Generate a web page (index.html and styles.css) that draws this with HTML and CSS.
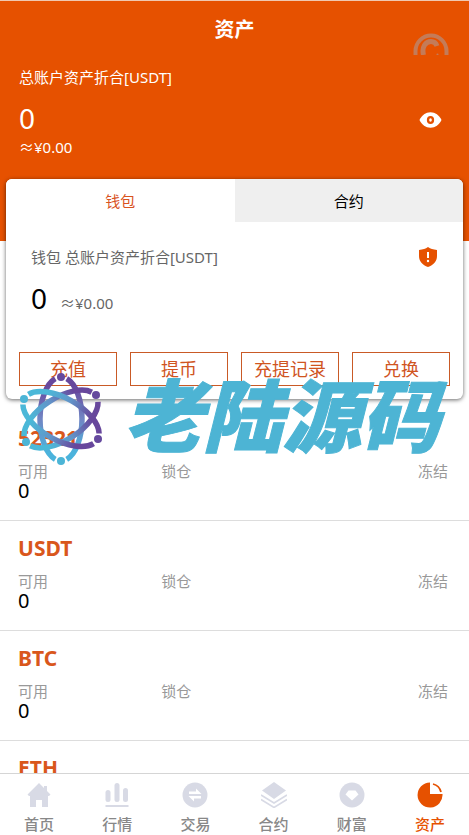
FILE: index.html
```html
<!DOCTYPE html>
<html lang="zh-CN">
<head>
<meta charset="utf-8">
<meta name="viewport" content="width=device-width, initial-scale=1">
<title>资产</title>
<link rel="stylesheet" href="styles.css">
</head>
<body>
<div class="app">
  <main class="content">
    <header class="hero">
      <h1 class="title">资产</h1>
      <svg class="record" viewBox="0 0 36 22" aria-hidden="true">
        <path d="M2.500 22V18a15.500 15.500 0 0 1 31 0v4" fill="none" stroke="currentColor" stroke-width="4"/>
        <path d="M10.500 22C8.500 14 12.500 8.500 18 8.500c3 0 5 1.500 6 4.500" fill="none" stroke="currentColor" stroke-width="5"/>
        <circle cx="24.500" cy="21.500" r="1"/>
      </svg>
      <p class="label">总账户资产折合[USDT]</p>
      <div class="total">
        <span class="amount">0</span>
        <button class="icon-button" type="button" aria-label="显示或隐藏资产">
          <svg class="eye" viewBox="0 0 24 18"><path fill="#fff" d="M.5 9C3 4 7 1 12 1s9 3 11.500 8C21 14 17 17 12 17S3 14 .5 9Z"/><ellipse cx="12" cy="9" rx="2.600" ry="3" fill="none" stroke="#e65100" stroke-width="2.400"/></svg>
        </button>
      </div>
      <p class="approx">≈¥0.00</p>
    </header>

    <section class="card">
      <div class="tabs">
        <button class="tab tab-active" type="button">钱包</button>
        <button class="tab" type="button">合约</button>
      </div>
      <div class="wallet">
        <div class="wallet-head">
          <span>钱包 总账户资产折合[USDT]</span>
          <svg class="shield" viewBox="0 0 20 20" aria-hidden="true"><path fill="#e65100" d="M10 0c2.500 1.800 5 2.600 9 2.900V9c0 5.500-3.500 9-9 11C4.500 18 1 14.500 1 9V2.900C5 2.600 7.500 1.800 10 0Z"/><path d="M10 5v6" stroke="#fff" stroke-width="2"/><circle cx="10" cy="14" r="1.200" fill="#fff"/></svg>
        </div>
        <div class="wallet-sum"><span class="wallet-amount">0</span><span>≈¥0.00</span></div>
      </div>
      <div class="actions">
        <button class="action" type="button">充值</button>
        <button class="action" type="button">提币</button>
        <button class="action" type="button">充提记录</button>
        <button class="action" type="button">兑换</button>
      </div>
    </section>

    <ul class="coins">
      <li class="coin"><h2 class="coin-name">52321</h2><dl class="figures"><div><dt>可用</dt><dd>0</dd></div><div><dt>锁仓</dt></div><div class="last"><dt>冻结</dt></div></dl></li>
      <li class="coin"><h2 class="coin-name">USDT</h2><dl class="figures"><div><dt>可用</dt><dd>0</dd></div><div><dt>锁仓</dt></div><div class="last"><dt>冻结</dt></div></dl></li>
      <li class="coin"><h2 class="coin-name">BTC</h2><dl class="figures"><div><dt>可用</dt><dd>0</dd></div><div><dt>锁仓</dt></div><div class="last"><dt>冻结</dt></div></dl></li>
      <li class="coin"><h2 class="coin-name">ETH</h2></li>
    </ul>
  </main>

  <nav class="nav">
    <a class="nav-item" href="#"><svg viewBox="0 0 26 26"><path d="M13 1 1.500 12.500 3 14h1v11h6v-7h6v7h6V14h1l1.500-1.500L21 9V4h-3v2Z"/></svg>首页</a>
    <a class="nav-item" href="#"><svg viewBox="0 0 26 26"><rect x="1.500" y="8" width="5" height="12" rx="2.500"/><rect x="10.500" y="1" width="5" height="19" rx="2.500"/><rect x="19" y="6" width="5" height="14" rx="2.500"/><rect x="1.500" y="23" width="23" height="2"/></svg>行情</a>
    <a class="nav-item" href="#"><svg viewBox="0 0 26 26"><circle cx="13" cy="13" r="12.500"/><path fill="#fff" d="M7 9.500h7V6.500l5.500 5.500H7Zm12 4.500H6.500l5.500 5.500v-3h7Z"/></svg>交易</a>
    <a class="nav-item" href="#"><svg viewBox="0 0 26 26"><path d="m13 0 12 8.500L13 17 1 8.500Z"/><path d="m0 13 13 8 13-8M0 17.500l13 8 13-8" fill="none" stroke="currentColor" stroke-width="1.600"/></svg>合约</a>
    <a class="nav-item" href="#"><svg viewBox="0 0 26 26"><circle cx="13" cy="13" r="12.500"/><path fill="#fff" d="M9.500 8.500h7l3 4-6.500 6-6.500-6Z"/></svg>财富</a>
    <a class="nav-item nav-active" href="#"><svg viewBox="0 0 26 26"><path d="M13 .5V12h12.500A12.500 12.500 0 1 1 13 .5Z"/><path d="M16 2a11 11 0 0 1 8 8" fill="none" stroke="currentColor" stroke-width="1.800"/></svg>资产</a>
  </nav>

  <div class="watermark">
    <svg class="atom" viewBox="0 0 90 96" aria-hidden="true">
      <defs>
        <linearGradient id="ring"><stop offset=".2" stop-color="#4bb8d8"/><stop offset=".5" stop-color="#6293c8"/><stop offset=".8" stop-color="#67479c"/></linearGradient>
        <linearGradient id="drop"><stop offset=".1" stop-color="#67479c"/><stop offset=".5" stop-color="#7186c4"/><stop offset=".9" stop-color="#4bb3dc"/></linearGradient>
      </defs>
      <g fill="none" stroke-width="5.500">
        <ellipse cx="43" cy="48" rx="42" ry="21" transform="rotate(90 43 48)" stroke="url(#drop)" pathLength="100" stroke-dasharray="0 3 44 6 44 3"/>
        <ellipse cx="43" cy="48" rx="42" ry="21" transform="rotate(-33 43 48)" stroke="url(#ring)" pathLength="100" stroke-dasharray="0 3 44 6 44 3"/>
        <ellipse cx="43" cy="48" rx="42" ry="21" transform="rotate(29 43 48)" stroke="url(#ring)" pathLength="100" stroke-dasharray="0 3 44 6 44 3"/>
      </g>
      <g fill="#65499e"><circle cx="43" cy="6" r="4"/><circle cx="78" cy="24" r="4"/><circle cx="80" cy="68" r="4"/></g>
      <g fill="#4cb5d6"><circle cx="6" cy="28" r="4"/><circle cx="8" cy="71" r="4"/><circle cx="43" cy="90" r="4"/></g>
    </svg>
    <span class="brand">老陆源码</span>
  </div>
</div>
</body>
</html>
```
FILE: styles.css
```css
* { box-sizing: border-box; }
body, h1, h2, p, ul, dl, dd { margin: 0; padding: 0; }
body {
  font-family: "Noto Sans", "Noto Sans CJK SC", sans-serif;
  font-size: 15px;
  line-height: 20px;
  color: #000;
  background: #fff;
}
button { font: inherit; padding: 0; border: 0; cursor: pointer; }
.app { position: relative; display: flex; flex-direction: column; height: 100vh; overflow: hidden; }
.content { flex: 1; min-height: 0; overflow: hidden; }
.hero {
  position: relative;
  height: 241px;
  padding: 17px 19px 0;
  border-top: 1px solid #f0c8b0;
  background: #e65100;
  color: #fff;
}
.title { font-size: 20px; line-height: 24px; text-align: center; }
.record { position: absolute; top: 32px; right: 20px; width: 36px; height: 22px; color: #c47b58; fill: currentColor; }
.label { margin-top: 25px; }
.total { display: flex; justify-content: space-between; align-items: center; margin-top: 12px; padding-right: 8px; }
.amount { font-size: 28px; line-height: 38px; }
.icon-button { display: flex; padding-top: 4px; background: none; }
.eye { width: 23px; height: 18px; }
.card {
  position: relative;
  margin: -62px 6px 0;
  overflow: hidden;
  border-radius: 6px;
  background: #fff;
  box-shadow: 0 1px 4px rgba(0, 0, 0, .6);
}
.tabs { display: flex; }
.tab { flex: 1; height: 43px; background: #efefef; color: #000; }
.tab-active { background: #fff; color: #d9531e; }
.wallet { padding: 25px 25px 0; color: #666; }
.wallet-head { display: flex; justify-content: space-between; align-items: center; }
.shield { width: 20px; height: 20px; }
.wallet-sum { display: flex; align-items: baseline; gap: 13px; margin-top: 12px; }
.wallet-amount { font-size: 28px; line-height: 38px; color: #000; }
.actions { display: grid; grid-template-columns: repeat(4, 1fr); gap: 13px; padding: 35px 13px 13px; }
.action { height: 34px; border: 1px solid #c95a26; background: #fff; color: #d0551f; font-size: 18px; }
.coins { margin-top: 12px; list-style: none; }
.coin { height: 110px; padding: 15px 21px 0 18px; border-bottom: 1px solid #ddd; }
.coin-name { font-size: 21px; line-height: 24px; color: #d9571c; }
.figures { display: grid; grid-template-columns: repeat(3, 1fr); margin-top: 11px; color: #999; }
.figures dd { color: #000; font-size: 20px; }
.last { text-align: right; }
.nav { display: flex; height: 62px; border-top: 1px solid #d5d5d5; background: #fff; }
.nav-item {
  flex: 1;
  display: flex;
  flex-direction: column;
  align-items: center;
  gap: 6px;
  padding-top: 8px;
  color: #888;
  font-weight: 500;
  text-decoration: none;
}
.nav-item svg { width: 26px; height: 26px; color: #d8dae5; fill: currentColor; }
.nav-active, .nav-active svg { color: #e65100; }
.watermark {
  position: absolute;
  top: 371px;
  left: 18px;
  display: flex;
  align-items: flex-start;
  gap: 16px;
  pointer-events: none;
}
.atom { width: 90px; height: 96px; }
.brand {
  font-family: "Noto Sans CJK SC", sans-serif;
  font-size: 79px;
  font-style: italic;
  font-weight: 900;
  line-height: 82px;
  white-space: nowrap;
  color: #4db4d4;
  -webkit-text-stroke: 1px #4db4d4;
}
```
